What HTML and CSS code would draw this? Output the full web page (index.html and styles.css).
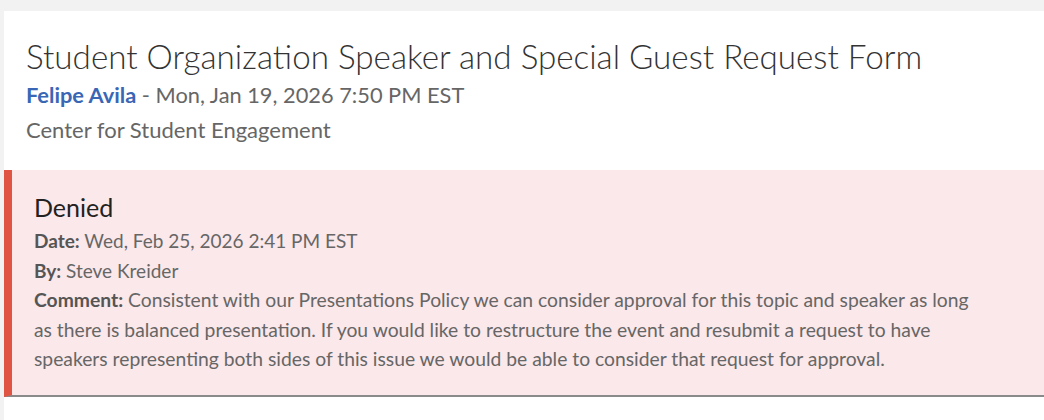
FILE: index.html
```html
<!DOCTYPE html>
<html>
<head>
<meta charset="utf-8">
<link rel="stylesheet" href="styles.css">
</head>
<body>
<div class="page">
  <div class="card">
    <header class="head">
      <h1 class="title">Student Organization Speaker and Special Guest Request Form</h1>
      <div class="meta"><span class="author">Felipe Avila</span> - Mon, Jan 19, 2026 7:50 PM EST</div>
      <div class="dept">Center for Student Engagement</div>
    </header>
    <section class="status">
      <div class="status-title">Denied</div>
      <div class="row"><b>Date:</b> Wed, Feb 25, 2026 2:41 PM EST</div>
      <div class="row"><b>By:</b> Steve Kreider</div>
      <div class="row comment"><b>Comment:</b> Consistent with our Presentations Policy we can consider approval for this topic and speaker as long as there is balanced presentation. If you would like to restructure the event and resubmit a request to have speakers representing both sides of this issue we would be able to consider that request for approval.</div>
    </section>
  </div>
</div>
</body>
</html>
```

FILE: styles.css
```css
html, body {
  margin: 0;
  padding: 0;
  background: #f2f2f2;
  font-family: Lato, "Liberation Sans", sans-serif;
}
.page {
  padding: 11px 0 0 4px;
}
.card {
  background: #fff;
  min-height: 409px;
}
.head {
  padding: 24px 22px 23px 22px;
}
.title {
  margin: 0;
  font-weight: 300;
  font-size: 33.2px;
  line-height: 42px;
  color: #333;
}
.meta, .dept {
  font-size: 22px;
  line-height: 35px;
  color: #666;
}
.meta {
  font-size: 21.8px;
}
.author {
  color: #3a66b6;
  font-weight: 700;
}
.status {
  background: #fbe8ea;
  border-left: 8px solid #e05443;
  border-bottom: 2px solid #8a8a8a;
  padding: 21px 55px 21px 22px;
}
.status-title {
  font-size: 25px;
  line-height: 32px;
  margin-bottom: 3px;
  color: #222;
}
.row {
  font-size: 19px;
  line-height: 29.5px;
  color: #666;
}
.comment {
  font-size: 19.3px;
}
.row b {
  color: #555;
}
```
